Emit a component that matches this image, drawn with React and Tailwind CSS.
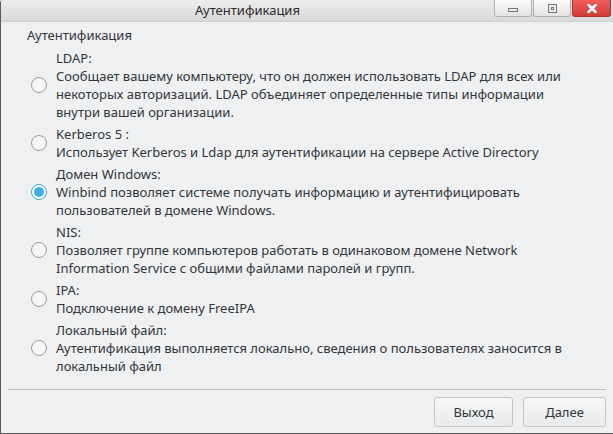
import React from "react";

const options = [
  { title: "LDAP:", desc: ["Сообщает вашему компьютеру, что он должен использовать LDAP для всех или", "некоторых авторизаций. LDAP объединяет определенные типы информации", "внутри вашей организации."] },
  { title: "Kerberos 5 :", desc: ["Использует Kerberos и Ldap для аутентификации на сервере Active Directory"] },
  { title: "Домен Windows:", desc: ["Winbind позволяет системе получать информацию и аутентифицировать", "пользователей в домене Windows."], checked: true },
  { title: "NIS:", desc: ["Позволяет группе компьютеров работать в одинаковом домене Network", "Information Service с общими файлами паролей и групп."] },
  { title: "IPA:", desc: ["Подключение к домену FreeIPA"] },
  { title: "Локальный файл:", desc: ["Аутентификация выполняется локально, сведения о пользователях заносится в", "локальный файл"] },
];

function Radio({ checked }) {
  if (checked) {
    return (
      <div className="w-[16px] h-[16px] rounded-full border border-[#3daee9] bg-[#3daee9] flex items-center justify-center shrink-0">
        <div className="w-[14px] h-[14px] rounded-full border-2 border-white bg-[#3daee9]" />
      </div>
    );
  }
  return <div className="w-[16px] h-[16px] rounded-full border border-[#9a9c9e] bg-[#f4f5f6] shrink-0" />;
}

export default function App() {
  return (
    <div className="w-[613px] h-[434px] bg-[#eff0f1] text-[#31363b] flex flex-col border-l border-b border-[#5a5a5a] rounded-tl-[3px] overflow-hidden" style={{ fontFamily: '"Noto Sans", sans-serif' }}>
      <div className="h-[22px] shrink-0 bg-gradient-to-b from-[#ededed] to-[#d9d9d9] border-b border-[#d0d0d0] flex items-start">
        <div className="flex-1 h-full flex items-center justify-center">
          <span className="text-[13px] text-[#2a2a2a] leading-none">Аутентификация</span>
        </div>
        <div className="flex gap-[1px] mr-[2px]">
          <div className="w-[38px] h-[17px] bg-gradient-to-b from-[#fbfbfb] to-[#e3e3e3] border border-[#b0b0b0] border-t-0 rounded-b-[3px] flex items-center justify-center">
            <div className="w-[10px] h-[4px] border border-[#777] mt-[4px]" />
          </div>
          <div className="w-[38px] h-[17px] bg-gradient-to-b from-[#fbfbfb] to-[#e3e3e3] border border-[#b0b0b0] border-t-0 rounded-b-[3px] flex items-center justify-center">
            <div className="w-[9px] h-[9px] border border-[#777] flex items-center justify-center">
              <div className="w-[3px] h-[3px] border border-[#777]" />
            </div>
          </div>
          <div className="w-[39px] h-[17px] bg-gradient-to-b from-[#ee5c5c] to-[#d33a3a] border border-[#b53030] border-t-0 rounded-b-[3px] flex items-center justify-center">
            <svg width="10" height="9" viewBox="0 0 10 9">
              <path d="M1.5 1 L8.5 8 M8.5 1 L1.5 8" stroke="white" strokeWidth="2.6" strokeLinecap="square" />
            </svg>
          </div>
        </div>
      </div>
      <div className="flex-1 flex flex-col text-[13px] leading-[18px]">
        <div className="pl-[26px] pt-[4px] pb-[5px]">Аутентификация</div>
        <div className="flex flex-col gap-[4px] pl-[30px]">
          {options.map((o, i) => (
            <div key={i} className="flex items-center gap-[9px]">
              <Radio checked={o.checked} />
              <div className="flex flex-col">
                <div>{o.title}</div>
                {o.desc.map((d, j) => (
                  <div key={j}>{d}</div>
                ))}
              </div>
            </div>
          ))}
        </div>
        <div className="mt-auto mx-[7px] border-t border-[#bdbfc1]" />
        <div className="flex justify-end gap-[10px] px-[7px] pt-[7px] pb-[6px]">
          <button className="w-[79px] h-[30px] rounded-[3px] border border-[#c3c5c7] bg-gradient-to-b from-[#f6f7f7] to-[#e9eaeb] text-[13px] text-[#31363b]">Выход</button>
          <button className="w-[83px] h-[30px] rounded-[3px] border border-[#c3c5c7] bg-gradient-to-b from-[#f6f7f7] to-[#e9eaeb] text-[13px] text-[#31363b]">Далее</button>
        </div>
      </div>
    </div>
  );
}
